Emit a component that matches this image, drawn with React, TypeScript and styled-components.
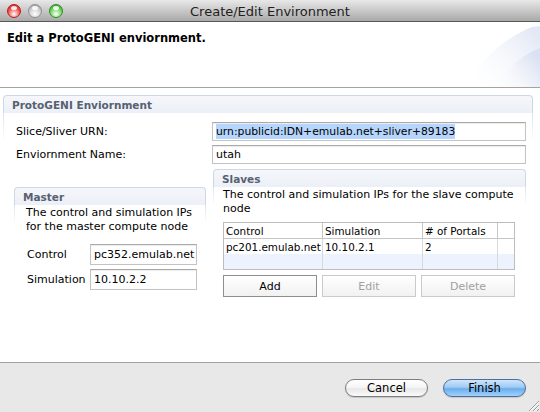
import React from "react";
import styled, { createGlobalStyle } from "styled-components";

const Global = createGlobalStyle`
  html, body { margin: 0; padding: 0; background: #fff; }
  body { font-family: "DejaVu Sans", "Lucida Grande", sans-serif; font-size: 10.5px; color: #000; }
  * { box-sizing: border-box; }
`;

const Window = styled.div`
  width: 540px;
  height: 412px;
  display: flex;
  flex-direction: column;
  overflow: hidden;
  position: relative;
`;

const TitleBar = styled.div`
  height: 22px;
  flex: none;
  background: linear-gradient(to bottom, #e8e8e8, #a9a9a9);
  border-bottom: 1px solid #575757;
  display: flex;
  align-items: center;
  position: relative;
`;

const Lights = styled.div`
  position: absolute;
  left: 7px;
  top: 4px;
  display: flex;
  gap: 7px;
`;

const Light = styled.div<{ $c: string; $d: string }>`
  width: 14px;
  height: 14px;
  border-radius: 50%;
  border: 1px solid ${(p) => p.$d};
  background: radial-gradient(circle at 50% 75%, #fff 0%, ${(p) => p.$c} 55%, ${(p) => p.$d} 100%);
  position: relative;
  &::after {
    content: "";
    position: absolute;
    left: 3px;
    top: 1px;
    width: 6px;
    height: 4px;
    border-radius: 50%;
    background: rgba(255, 255, 255, 0.85);
  }
`;

const Title = styled.div`
  flex: 1;
  text-align: center;
  font-size: 13px;
  color: #1e1e1e;
  padding-top: 1px;
`;

const Header = styled.div`
  height: 66px;
  flex: none;
  background: #fff;
  border-bottom: 1px solid #a3a3a3;
  padding: 9px 7px;
  position: relative;
`;

const HeaderText = styled.div`
  font-weight: bold;
  font-size: 11.5px;
`;

const Swoosh = styled.svg`
  position: absolute;
  right: 0;
  top: 0;
`;

const Body = styled.div`
  flex: 1;
  background: #fff;
  padding: 7px 7px 0 3px;
  border-bottom: 1px solid #a0a0a0;
`;

const SectionBox = styled.div`
  display: flex;
  flex-direction: column;
`;

const SectionHead = styled.div`
  height: 18px;
  border: 1px solid #cdd7e8;
  border-bottom: none;
  border-radius: 4px 4px 0 0;
  background: linear-gradient(to bottom, #f6f7fb, #eceff7);
  padding-left: 8px;
  display: flex;
  align-items: center;
  font-weight: bold;
  color: #566171;
  font-size: 10.5px;
`;

const SectionBody = styled.div`
  border-left: 1px solid;
  border-right: 1px solid;
  border-image: linear-gradient(to bottom, #dbe2ef, rgba(255, 255, 255, 0) 30px) 1;
  padding-top: 9px;
`;

const FormGrid = styled.div`
  display: grid;
  grid-template-columns: 196px 314px;
  row-gap: 4px;
  padding-left: 12px;
  align-items: center;
`;

const Label = styled.div`
  font-size: 11px;
`;

const Input = styled.div<{ $h?: number }>`
  height: ${(p) => p.$h ?? 19}px;
  border: 1px solid #c3c3c3;
  border-top-color: #a9a9a9;
  box-shadow: inset 0 1px 1px rgba(0, 0, 0, 0.08);
  background: #fff;
  display: flex;
  align-items: center;
  padding-left: 3px;
  font-size: 11px;
  white-space: nowrap;
  overflow: hidden;
`;

const Selected = styled.span`
  background: #b5d5fc;
  padding: 1px 0;
  font-size: 10.8px;
`;

const Lower = styled.div`
  display: flex;
  align-items: flex-start;
  padding-top: 5px;
`;

const Group = styled.div<{ $w: number; $ml: number; $mt: number }>`
  width: ${(p) => p.$w}px;
  margin-left: ${(p) => p.$ml}px;
  margin-top: ${(p) => p.$mt}px;
  display: flex;
  flex-direction: column;
`;

const GroupBody = styled.div<{ $pl: number }>`
  border-left: 1px solid;
  border-right: 1px solid;
  border-image: linear-gradient(to bottom, #dbe2ef, rgba(255, 255, 255, 0) 20px) 1;
  padding-left: ${(p) => p.$pl}px;
  padding-top: 1px;
`;

const Desc = styled.div`
  font-size: 11px;
  line-height: 14px;
`;

const FieldRow = styled.div`
  display: grid;
  grid-template-columns: 63px 107px;
  row-gap: 4px;
  align-items: center;
  margin-top: 10px;
  margin-left: 1px;
`;

const Table = styled.div`
  margin-top: 6px;
  width: 292px;
  border: 1px solid #bdbdbd;
  display: grid;
  grid-template-columns: 99px 100px 75px 1fr;
`;

const Cell = styled.div<{ $head?: boolean; $alt?: boolean; $last?: boolean }>`
  height: ${(p) => (p.$head ? 16 : 15)}px;
  font-size: 10.4px;
  padding-left: 2px;
  display: flex;
  align-items: center;
  white-space: nowrap;
  overflow: hidden;
  border-right: ${(p) => (p.$last ? "none" : p.$head ? "1px solid #c6c6c6" : "1px solid #d9d9d9")};
  border-bottom: ${(p) => (p.$head ? "1px solid #c6c6c6" : "none")};
  background: ${(p) => (p.$alt ? "#edf3fe" : "#fff")};
`;

const BtnRow = styled.div`
  display: flex;
  gap: 5px;
  margin-top: 5px;
`;

const TBtn = styled.div<{ $disabled?: boolean }>`
  width: 94px;
  height: 22px;
  border: 1px solid ${(p) => (p.$disabled ? "#cacaca" : "#8e8e8e")};
  background: linear-gradient(to bottom, #ffffff, #f1f1f1);
  color: ${(p) => (p.$disabled ? "#a0a0a0" : "#000")};
  display: flex;
  align-items: center;
  justify-content: center;
  font-size: 11px;
`;

const ButtonBar = styled.div`
  height: 49px;
  flex: none;
  background: #e8e8e8;
  display: flex;
  justify-content: flex-end;
  align-items: flex-start;
  padding: 16px 14px 0 0;
  gap: 15px;
  position: relative;
`;

const Pill = styled.div<{ $primary?: boolean }>`
  width: 83px;
  height: 18px;
  border-radius: 9px;
  border: 1px solid ${(p) => (p.$primary ? "#4e6f9c" : "#7d7d7d")};
  background: ${(p) =>
    p.$primary
      ? "linear-gradient(to bottom, #cfe5fb 0%, #9fcbf4 45%, #6aaeee 55%, #9fd2fb 100%)"
      : "linear-gradient(to bottom, #ffffff 0%, #f6f6f6 45%, #e8e8e8 55%, #fafafa 100%)"};
  display: flex;
  align-items: center;
  justify-content: center;
  font-size: 11.5px;
  color: #000;
  box-shadow: 0 1px 1px rgba(0, 0, 0, 0.15);
`;

const Grip = styled.svg`
  position: absolute;
  right: 0;
  bottom: 0;
`;

export default function App() {
  return (
    <Window>
      <Global />
      <TitleBar>
        <Lights>
          <Light $c="#f2514c" $d="#b31e1b" />
          <Light $c="#cfcfcf" $d="#8f8f8f" />
          <Light $c="#6fd45a" $d="#2f8a26" />
        </Lights>
        <Title>Create/Edit Environment</Title>
      </TitleBar>
      <Header>
        <HeaderText>Edit a ProtoGENI enviornment.</HeaderText>
        <Swoosh width="80" height="65" viewBox="0 0 80 65">
          <defs>
            <linearGradient id="sw1" x1="0" y1="1" x2="1" y2="0.2">
              <stop offset="0" stopColor="#ffffff" stopOpacity="0" />
              <stop offset="1" stopColor="#e3e8f5" stopOpacity="1" />
            </linearGradient>
            <linearGradient id="sw2" x1="0" y1="1" x2="1" y2="0.3">
              <stop offset="0" stopColor="#ffffff" stopOpacity="0" />
              <stop offset="1" stopColor="#d8dff1" stopOpacity="0.9" />
            </linearGradient>
          </defs>
          <path d="M6 65 C 20 40, 40 18, 72 5 L 80 4 L 80 65 Z" fill="url(#sw1)" />
          <path d="M36 65 C 46 48, 60 34, 80 26 L 80 65 Z" fill="url(#sw2)" />
        </Swoosh>
      </Header>
      <Body>
        <SectionBox>
          <SectionHead>ProtoGENI Enviornment</SectionHead>
          <SectionBody>
            <FormGrid>
              <Label>Slice/Sliver URN:</Label>
              <Input>
                <Selected>urn:publicid:IDN+emulab.net+sliver+89183</Selected>
              </Input>
              <Label>Enviornment Name:</Label>
              <Input>utah</Input>
            </FormGrid>
            <Lower>
              <Group $w={192} $ml={10} $mt={18}>
                <SectionHead>Master</SectionHead>
                <GroupBody $pl={11}>
                  <Desc>
                    The control and simulation IPs
                    <br />
                    for the master compute node
                  </Desc>
                  <FieldRow>
                    <Label>Control</Label>
                    <Input $h={21}>pc352.emulab.net</Input>
                    <Label>Simulation</Label>
                    <Input $h={21}>10.10.2.2</Input>
                  </FieldRow>
                </GroupBody>
              </Group>
              <Group $w={313} $ml={7} $mt={0}>
                <SectionHead>Slaves</SectionHead>
                <GroupBody $pl={9}>
                  <Desc>
                    The control and simulation IPs for the slave compute
                    <br />
                    node
                  </Desc>
                  <Table>
                    <Cell $head>Control</Cell>
                    <Cell $head>Simulation</Cell>
                    <Cell $head># of Portals</Cell>
                    <Cell $head $last />
                    <Cell>pc201.emulab.net</Cell>
                    <Cell>10.10.2.1</Cell>
                    <Cell>2</Cell>
                    <Cell $last />
                    <Cell $alt />
                    <Cell $alt />
                    <Cell $alt />
                    <Cell $alt $last />
                  </Table>
                  <BtnRow>
                    <TBtn>Add</TBtn>
                    <TBtn $disabled>Edit</TBtn>
                    <TBtn $disabled>Delete</TBtn>
                  </BtnRow>
                </GroupBody>
              </Group>
            </Lower>
          </SectionBody>
        </SectionBox>
      </Body>
      <ButtonBar>
        <Pill>Cancel</Pill>
        <Pill $primary>Finish</Pill>
        <Grip width="14" height="14" viewBox="0 0 14 14">
          <path d="M13 3 L3 13 M13 7 L7 13 M13 11 L11 13" stroke="#9a9a9a" strokeWidth="1" />
          <path d="M13 4 L4 13 M13 8 L8 13" stroke="#ffffff" strokeWidth="1" />
        </Grip>
      </ButtonBar>
    </Window>
  );
}
